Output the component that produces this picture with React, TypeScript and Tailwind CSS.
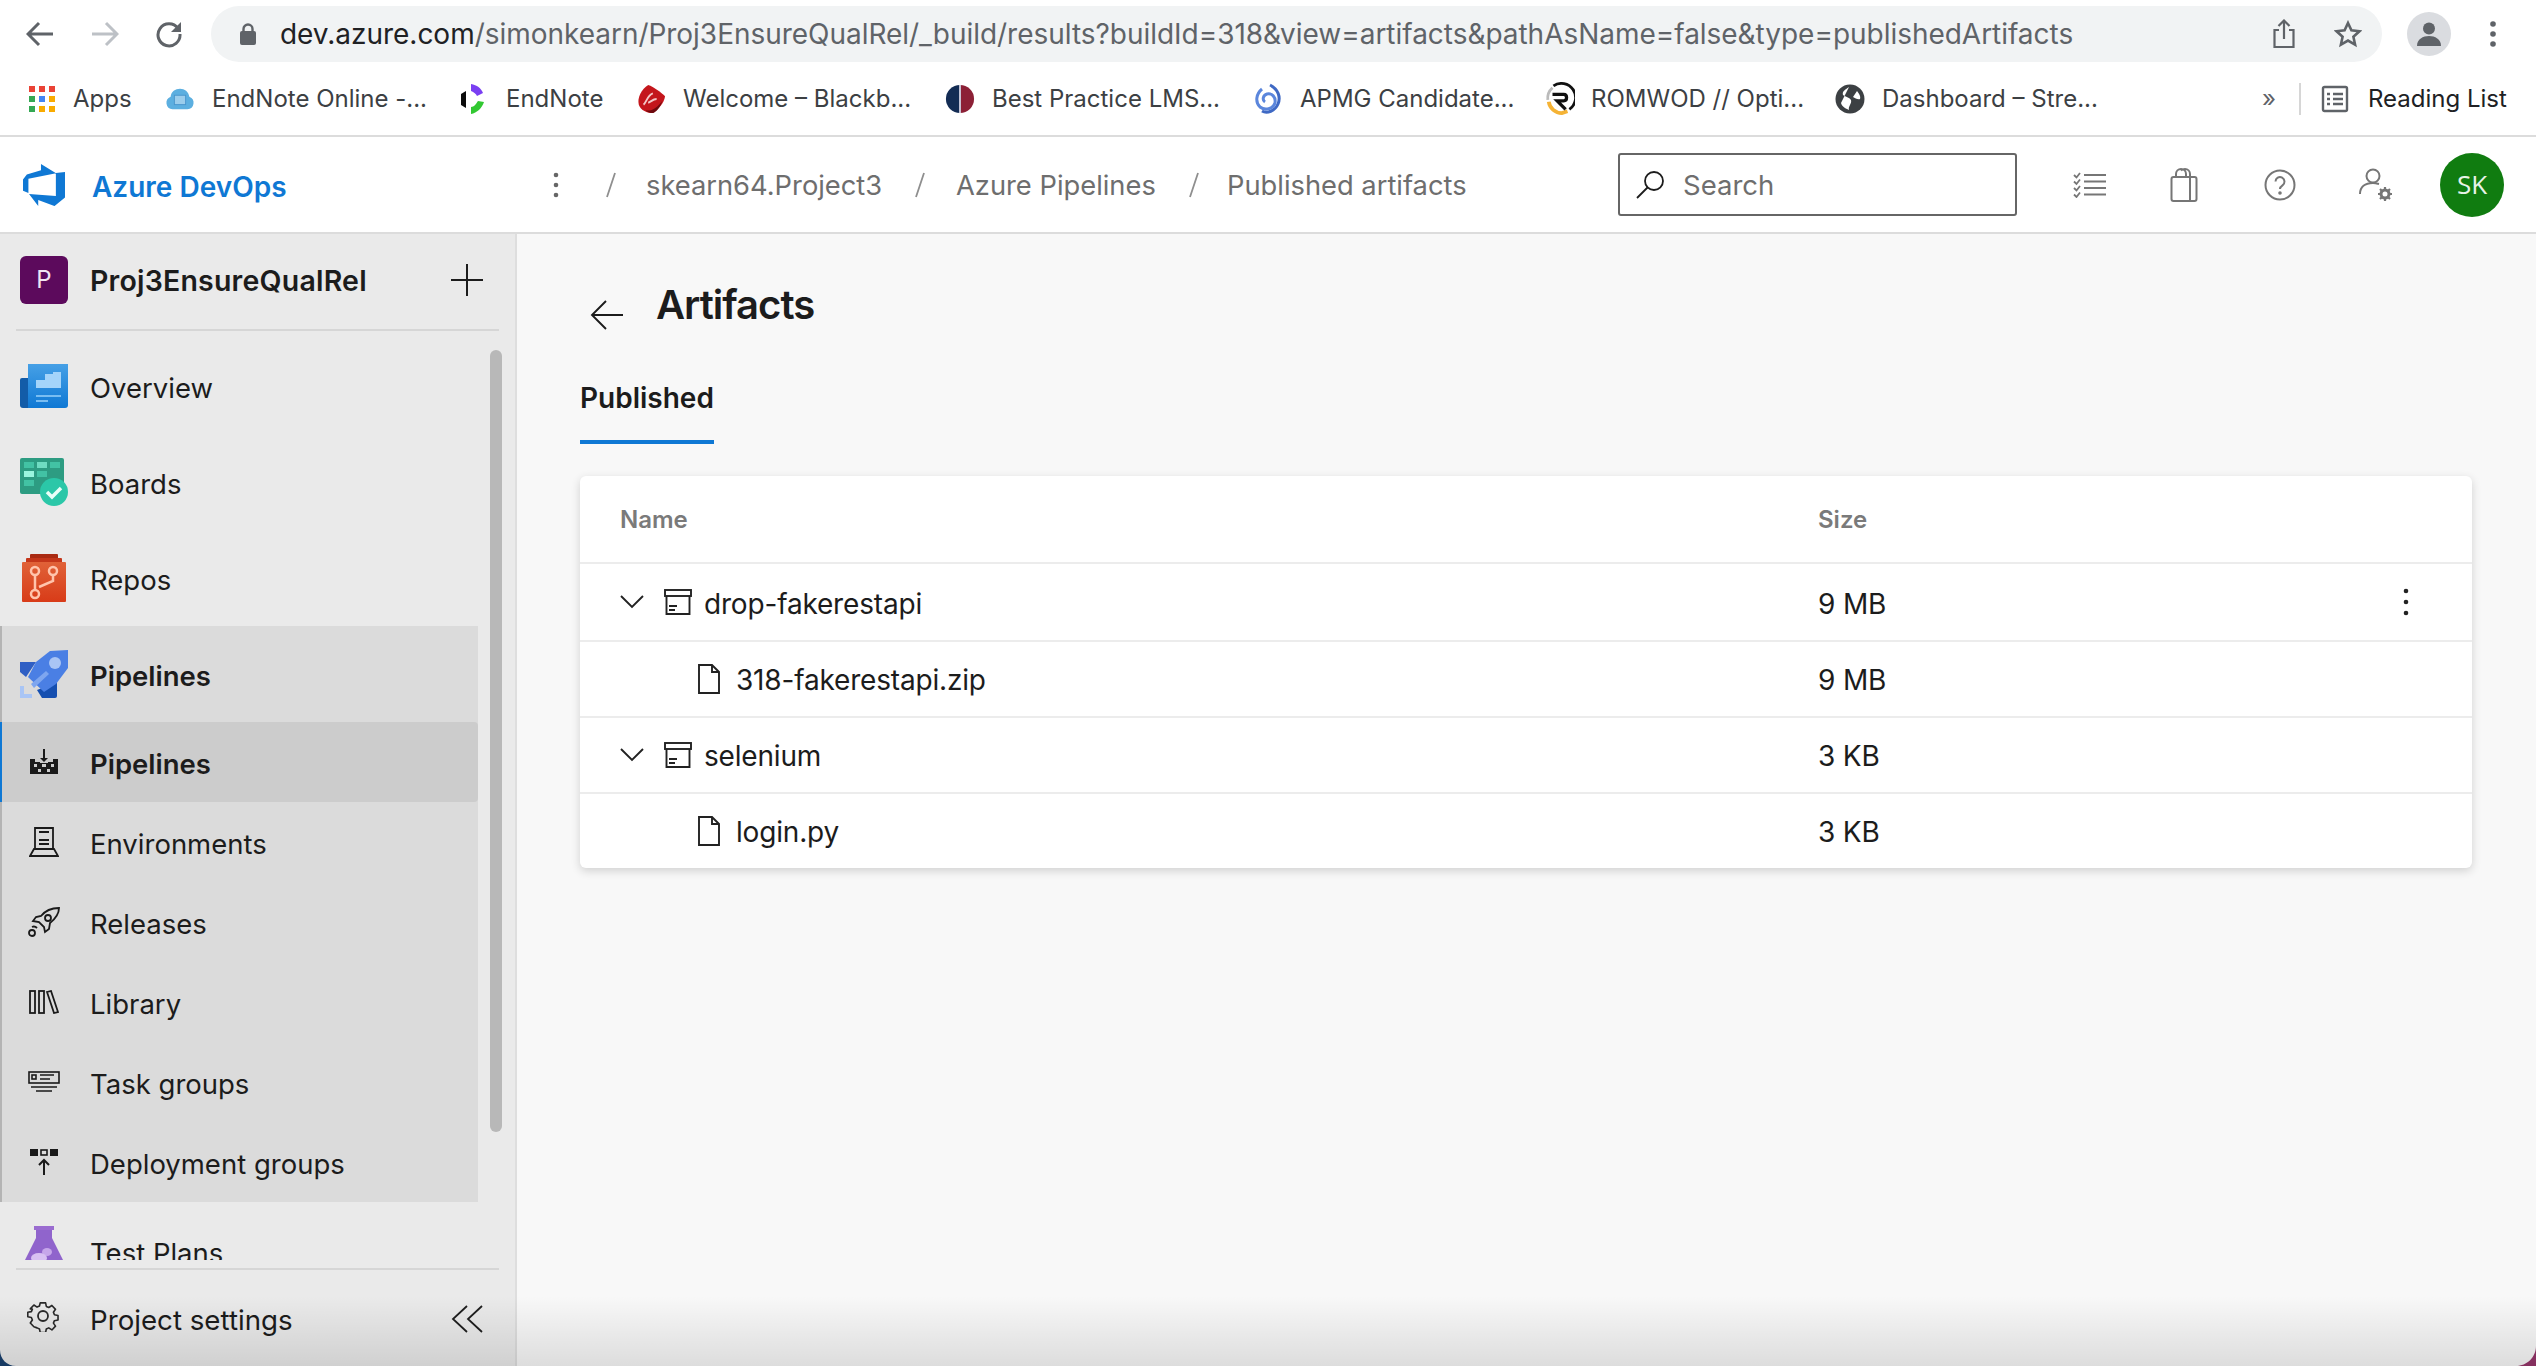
import React from "react";

const Back = () => (
  <svg width="28" height="26" viewBox="0 0 28 26" fill="none" stroke="#5f6368" strokeWidth="3"><path d="M27 13H3M13 2 2 13l11 11" /></svg>
);
const Forward = () => (
  <svg width="28" height="26" viewBox="0 0 28 26" fill="none" stroke="#bdc1c6" strokeWidth="3"><path d="M1 13h24M15 2l11 11-11 11" /></svg>
);
const Reload = () => (
  <svg width="28" height="28" viewBox="0 0 28 28" fill="none"><path d="M23 8.500A11 11 0 1 0 25 14" stroke="#5f6368" strokeWidth="3" /><path d="M26 2v10H16z" fill="#5f6368" /></svg>
);
const Lock = () => (
  <svg width="18" height="22" viewBox="0 0 18 22" fill="none"><rect x="1" y="8" width="16" height="14" rx="2" fill="#5f6368" /><path d="M4.500 9V6a4.500 4.500 0 0 1 9 0v3" stroke="#5f6368" strokeWidth="2.400" /></svg>
);
const Share = () => (
  <svg width="24" height="30" viewBox="0 0 24 30" fill="none" stroke="#5f6368" strokeWidth="2.200"><path d="M7 11H2.500v17h19V11H17M12 20V2M6.500 7 12 1.500 17.500 7" /></svg>
);
const Star = () => (
  <svg width="28" height="28" viewBox="0 0 28 28" fill="none" stroke="#5f6368" strokeWidth="2.600"><path d="m14 3 3.400 7.400 8 .9-6 5.400 1.700 7.900L14 20.600l-7.100 4 1.700-7.900-6-5.400 8-.9z" /></svg>
);
const Profile = () => (
  <div className="flex h-[44px] w-[44px] items-center justify-center rounded-full bg-[#dadce0]">
    <svg width="28" height="28" viewBox="0 0 28 28" fill="#5f6368"><circle cx="14" cy="8.500" r="6" /><path d="M2 26c0-7 6-10 12-10s12 3 12 10z" /></svg>
  </div>
);
const ChromeDots = () => (
  <svg width="6" height="26" viewBox="0 0 6 26" fill="#5f6368"><circle cx="3" cy="3" r="2.800" /><circle cx="3" cy="13" r="2.800" /><circle cx="3" cy="23" r="2.800" /></svg>
);

const AppsIcon = () => (
  <svg width="26" height="26" viewBox="0 0 26 26">
    {[
      ["#ea4335", 0, 0], ["#ea4335", 10, 0], ["#ea4335", 20, 0],
      ["#34a853", 0, 10], ["#4285f4", 10, 10], ["#f9ab00", 20, 10],
      ["#34a853", 0, 20], ["#f9ab00", 10, 20], ["#f9ab00", 20, 20],
    ].map(([c, x, y], i) => (
      <rect key={i} x={x as number} y={y as number} width="6" height="6" fill={c as string} />
    ))}
  </svg>
);
const EndNoteOnlineIcon = () => (
  <svg width="32" height="24" viewBox="0 0 32 24">
    <path d="M8 23a7 7 0 0 1-2-13.500C6.500 4 11 1 16 1s9 3 10 8.500A7 7 0 0 1 24 23z" fill="#5cafe0" />
    <rect x="10" y="8" width="12" height="10" fill="#9bcdec" stroke="#4a96cc" />
  </svg>
);
const EndNoteIcon = () => (
  <svg width="30" height="32" viewBox="0 0 30 32" fill="none">
    <path d="M13 1c6 1 10 4 12 9l-6 3c-1-2-3-4-6-5z" fill="#7a3ff2" />
    <path d="M8 8 3 11v11l5 3z" fill="#0b0b0b" />
    <path d="M26 19c-2 6-7 11-13 12v-7c3 0 5-3 7-6z" fill="#32c832" />
  </svg>
);
const VirginIcon = () => (
  <svg width="32" height="32" viewBox="0 0 32 32">
    <path d="M13 1c6 2 14 8 18 12-1 7-7 14-13 18C12 31 5 28 3 22 1 15 6 5 13 1z" fill="#c4161c" />
    <path d="M8 22c3-2 4-10 10-12M13 20c3-1 5-4 9-4" stroke="#f3c9c9" strokeWidth="2" fill="none" />
    <path d="M10 28c6 2 14-4 18-10-2 7-7 12-10 13-3 0-6-1-8-3z" fill="#6d0a0e" />
  </svg>
);
const BestIcon = () => (
  <svg width="32" height="32" viewBox="0 0 32 32">
    <path d="M16 1a15 15 0 0 0 0 30z" fill="#132c54" />
    <path d="M16 1a15 15 0 0 1 0 30z" fill="#8c2036" />
    <rect x="15" y="1" width="2" height="30" fill="#ccd" />
  </svg>
);
const ApmgIcon = () => (
  <svg width="30" height="32" viewBox="0 0 30 32" fill="none" stroke="#3f69c4" strokeWidth="3">
    <path d="M17 2c8 4 11 12 8 19-3 7-11 10-16 7" />
    <path d="M9 6C3 11 2 19 7 24c5 4 13 2 15-4 1-6-3-10-8-9-4 1-5 6-2 8" stroke="#5b86dc" />
  </svg>
);
const RomwodIcon = () => (
  <svg width="32" height="34" viewBox="0 0 32 34" fill="none">
    <path d="M9 3a15 15 0 0 1 17 25" stroke="#111" strokeWidth="3" />
    <path d="M8 5A15 15 0 0 0 3 18" stroke="#bbb" strokeWidth="3" />
    <path d="M4 20c1 7 7 12 14 12l6-2" stroke="#f5b335" strokeWidth="4" />
    <path d="M8 12h12c4 0 4 7 0 7h-7l9 9" stroke="#111" strokeWidth="3.500" />
  </svg>
);
const DashboardIcon = () => (
  <svg width="30" height="30" viewBox="0 0 30 30">
    <circle cx="15" cy="15" r="14.500" fill="#3c4043" />
    <path d="M14 3c-4 3-7 4-6 8 3 2 6 2 8 5 1 4-3 6-2 10-2-1-7-3-8-7M22 7c2 3 4 5 3 8-2 1-5-1-7-2z" fill="#fff" />
  </svg>
);
const ReadingIcon = () => (
  <svg width="28" height="28" viewBox="0 0 28 28" fill="none" stroke="#5f6368" strokeWidth="2.400">
    <rect x="2" y="2" width="24" height="24" rx="1.500" />
    <path d="M6 9h3M12 9h10M6 14h3M12 14h10M6 19h3M12 19h10" />
  </svg>
);

const bookmarks = [
  { w: "w-[138px]", icon: <AppsIcon />, gap: "gap-[16px]", ml: "ml-[27px]", label: "Apps" },
  { w: "w-[293px]", icon: <EndNoteOnlineIcon />, gap: "gap-[17px]", ml: "", label: "EndNote Online -..." },
  { w: "w-[178px]", icon: <EndNoteIcon />, gap: "gap-[18px]", ml: "", label: "EndNote" },
  { w: "w-[309px]", icon: <VirginIcon />, gap: "gap-[17px]", ml: "", label: "Welcome – Blackb..." },
  { w: "w-[308px]", icon: <BestIcon />, gap: "gap-[17px]", ml: "", label: "Best Practice LMS..." },
  { w: "w-[292px]", icon: <ApmgIcon />, gap: "gap-[17px]", ml: "", label: "APMG Candidate..." },
  { w: "w-[290px]", icon: <RomwodIcon />, gap: "gap-[16px]", ml: "", label: "ROMWOD // Opti..." },
  { w: "w-[427px]", icon: <DashboardIcon />, gap: "gap-[17px]", ml: "", label: "Dashboard – Stre..." },
];

const Crumb = ({ children }: { children: React.ReactNode }) => (
  <span className="block whitespace-nowrap pt-[4px] text-[27.3px] text-[#6e6e6e]">{children}</span>
);
const Slash = () => (
  <svg width="12" height="26" viewBox="0 0 12 26" fill="none" stroke="#8f8f8f" strokeWidth="1.800"><path d="M10 1 2 25" /></svg>
);

const ListIcon = () => (
  <svg width="34" height="26" viewBox="0 0 34 26" fill="none" stroke="#767676" strokeWidth="2.200">
    <path d="M11 3h22M11 9.500h22M11 16h22M11 22.500h22" />
    <path d="M1 3l2.500 2.500L7 1M1 9.500 3.500 12 7 7.500M1 16l2.500 2.500L7 14M1 22.500 3.500 25 7 20.500" strokeWidth="1.800" />
  </svg>
);
const BagIcon = () => (
  <svg width="28" height="34" viewBox="0 0 28 34" fill="none" stroke="#767676" strokeWidth="2">
    <rect x="1.500" y="9" width="25" height="24" rx="2" />
    <path d="M20 9v24M6 9V6a5 5 0 0 1 10 0v3M11 2.500C12 1.500 13 1 15 1a5 5 0 0 1 5 5v3" />
  </svg>
);
const HelpIcon = () => (
  <svg width="32" height="32" viewBox="0 0 32 32" fill="none" stroke="#767676" strokeWidth="2">
    <circle cx="16" cy="16" r="14.500" />
    <path d="M11.500 12.500a4.500 4.500 0 1 1 7 3.800c-1.500 1-2.500 1.700-2.500 3.700" />
    <circle cx="16" cy="24" r="0.800" fill="#767676" />
  </svg>
);
const UserGearIcon = () => (
  <svg width="34" height="34" viewBox="0 0 34 34" fill="none" stroke="#767676" strokeWidth="2">
    <circle cx="14" cy="8" r="6.500" />
    <path d="M1 26c0-7 5-11 13-11 2 0 4 .5 6 1" />
    <circle cx="26" cy="26" r="4" strokeWidth="3" />
    <path d="M26 19v3M26 30v3M19 26h3M30 26h3M21 21l2 2M29 29l2 2M21 31l2-2M29 23l2-2" strokeWidth="2.200" />
  </svg>
);

const OverviewIcon = () => (
  <svg width="48" height="44" viewBox="0 0 48 44">
    <defs>
      <linearGradient id="ovg" x1="0" y1="0" x2="0" y2="1">
        <stop offset="0" stopColor="#46a0e6" />
        <stop offset="1" stopColor="#0f78d4" />
      </linearGradient>
    </defs>
    <path d="M2 14h8v30H3a3 3 0 0 1-3-3V16a2 2 0 0 1 2-2z" fill="#135ca8" />
    <path d="M8 0h40v41a3 3 0 0 1-3 3H8z" fill="url(#ovg)" />
    <path d="M16 16h9v-6h8V8h8v16H16z" fill="#a4d4fa" />
    <path d="M16 31h25v2H16zM16 36h12v2H16z" fill="#79bdf2" />
  </svg>
);
const BoardsIcon = () => (
  <svg width="48" height="48" viewBox="0 0 48 48">
    <rect width="44" height="36" rx="2" fill="#2d9c82" />
    <rect x="4" y="4" width="10" height="6" fill="#42c2a4" />
    <rect x="17" y="4" width="10" height="6" fill="#6fdcc2" />
    <rect x="30" y="4" width="10" height="6" fill="#42c2a4" />
    <rect x="4" y="13" width="10" height="6" fill="#9af5de" />
    <rect x="17" y="13" width="10" height="6" fill="#42c2a4" />
    <rect x="4" y="22" width="10" height="6" fill="#42c2a4" />
    <circle cx="34" cy="34" r="14" fill="#2bc7a8" />
    <path d="m27 34 5 5 9-9" fill="none" stroke="#e9fff9" strokeWidth="3.500" />
  </svg>
);
const ReposIcon = () => (
  <svg width="44" height="48" viewBox="0 0 44 48">
    <defs>
      <linearGradient id="rpg" x1="0" y1="0" x2="0" y2="1">
        <stop offset="0" stopColor="#e06238" />
        <stop offset="1" stopColor="#d83b18" />
      </linearGradient>
    </defs>
    <rect x="8" y="0" width="28" height="6" rx="1" fill="#a92a12" />
    <rect x="4" y="4" width="36" height="8" rx="1" fill="#c4361a" />
    <rect y="8" width="44" height="40" rx="1" fill="url(#rpg)" />
    <g fill="none" stroke="#ffc4ac" strokeWidth="2.500">
      <circle cx="13" cy="17" r="4" /><circle cx="31" cy="17" r="4" /><circle cx="13" cy="40" r="4" />
      <path d="M13 21v15M31 21v6l-14 6" />
    </g>
  </svg>
);
const RocketIcon = () => (
  <svg width="48" height="48" viewBox="0 0 48 48">
    <path d="M0 12h16L6 27 0 22z" fill="#2f5fc4" />
    <path d="M22 48h13a2 2 0 0 0 2-2V32L17 40z" fill="#154fb0" />
    <path d="M16 12 30 1l18-1v18L36 34 24 42 8 27z" fill="#4a7fe4" />
    <path d="M11 34 26 21l3 3-15 14z" fill="#7ea6ef" />
    <circle cx="35" cy="13" r="6" fill="#a9c5f5" />
    <path d="M0 36h4v8h8v4H0z" fill="#a9c5f5" />
  </svg>
);
const FlaskIcon = () => (
  <svg width="40" height="34" viewBox="0 0 40 34">
    <rect x="10" y="0" width="20" height="4" fill="#9a6cd0" />
    <path d="M12 4h16v8l11 22H1l11-22z" fill="#9064cc" />
    <ellipse cx="23" cy="26" rx="5" ry="4" fill="#c6a6ea" />
    <ellipse cx="15" cy="32" rx="8" ry="5" fill="#d8c0f2" />
  </svg>
);

const PipeSub = () => (
  <svg width="30" height="26" viewBox="0 0 30 26" fill="#1a1a1a">
    <path d="M14 0h2v9h3l-4 4-4-4h3z" />
    <path d="M1 10h5v3h5v1h8v-1h5v-3h5v15H1zM5 15v3h3v-3zM13 15v3h4v-3zM22 15v3h3v-3zM9 20v3h3v-3zM18 20v3h3v-3z" fillRule="evenodd" />
  </svg>
);
const EnvIcon = () => (
  <svg width="30" height="30" viewBox="0 0 30 30" fill="none" stroke="#1a1a1a" strokeWidth="1.800">
    <path d="M6 22V1h18v21M1 29l4-7h20l4 7zM1 29h28" />
    <path d="M10 13h10M10 17h10M10 5h10" />
  </svg>
);
const RelIcon = () => (
  <svg width="32" height="30" viewBox="0 0 32 30" fill="none" stroke="#1a1a1a" strokeWidth="1.800">
    <path d="M31 1c-8 0-14 3-18 8l-5 1-3 4 6 1 5 5 1 5 4-3 1-6c5-4 9-8 9-15z" />
    <circle cx="20" cy="11" r="3" />
    <circle cx="4" cy="26" r="3" />
    <path d="M4 20c2-1 4 0 5 1" />
  </svg>
);
const LibIcon = () => (
  <svg width="30" height="24" viewBox="0 0 30 24" fill="none" stroke="#1a1a1a" strokeWidth="1.800">
    <rect x="1" y="1" width="5" height="22" /><rect x="10" y="1" width="5" height="22" />
    <path d="m18 2 4-1 7 21-4 1z" />
  </svg>
);
const TaskIcon = () => (
  <svg width="32" height="22" viewBox="0 0 32 22" fill="none" stroke="#1a1a1a" strokeWidth="1.600">
    <rect x="1" y="1" width="30" height="11" />
    <rect x="4" y="4" width="4" height="4" />
    <path d="M12 4h14M12 8h10M3 16h26M8 20h16" />
  </svg>
);
const DeployIcon = () => (
  <svg width="30" height="26" viewBox="0 0 30 26">
    <rect x="1" y="0" width="8" height="7" fill="#1a1a1a" />
    <rect x="12" y="1" width="6" height="5" fill="none" stroke="#1a1a1a" strokeWidth="1.600" />
    <rect x="21" y="0" width="8" height="7" fill="#1a1a1a" />
    <path d="M15 26V12M10 16l5-5 5 5" fill="none" stroke="#1a1a1a" strokeWidth="2" />
  </svg>
);
const GearIcon = () => (
  <svg width="32" height="32" viewBox="0 0 32 32" fill="none" stroke="#2a2a2a" strokeWidth="1.800" strokeLinejoin="round">
    <circle cx="16" cy="16" r="5" />
    <path d="m13 1.500 6 0 .8 4 2.700 1.200 3.500-2.300 4 4.300-2.300 3.300 1.100 2.800 4 .7v5l-4 .8-1.100 2.700 2.300 3.400-4 4.200-3.500-2.300-2.700 1.200-.8 4h-6l-.8-4-2.700-1.200L6 28.100l-4-4.200 2.300-3.400-1.100-2.700-4-.8v-5l4-.7 1.100-2.800L2 8.200l4-4.300 3.500 2.300 2.700-1.200z" transform="translate(1.500 1.500) scale(.9)" />
  </svg>
);
const Collapse = () => (
  <svg width="32" height="28" viewBox="0 0 32 28" fill="none" stroke="#1f1f1f" strokeWidth="1.800"><path d="M16 1 2 14l14 13M31 1 17 14l14 13" /></svg>
);
const Chevron = () => (
  <svg width="24" height="14" viewBox="0 0 24 14" fill="none" stroke="#222" strokeWidth="1.900"><path d="m1 1 11 11L23 1" /></svg>
);
const BoxIcon = () => (
  <svg width="28" height="26" viewBox="0 0 28 26" fill="none" stroke="#222" strokeWidth="1.900">
    <rect x="1" y="1" width="26" height="6" /><path d="M2.500 7v18h23V7M5 17h8M5 21h6" />
  </svg>
);
const FileIcon = () => (
  <svg width="24" height="30" viewBox="0 0 24 30" fill="none" stroke="#222" strokeWidth="1.900">
    <path d="M2 1h13l7 7v21H2zM15 1v7h7" />
  </svg>
);

const Sub = ({ icon, label, selected }: { icon: React.ReactNode; label: string; selected?: boolean }) => (
  <div className={`flex h-[80px] items-center rounded-r-[4px] ${selected ? "-ml-[2px] border-l-[2px] border-[#0f78d4] bg-[#cccccc] font-semibold" : ""}`}>
    <div className="ml-[15px] flex w-[53px] justify-center">{icon}</div>
    <span className="ml-[20px] pt-[6px] text-[27.5px] text-[#1c1c1c]">{label}</span>
  </div>
);

const Top = ({ icon, label }: { icon: React.ReactNode; label: string }) => (
  <div className="flex h-[96px] items-center pl-[20px]">
    <div className="flex w-[48px] justify-center">{icon}</div>
    <span className="ml-[22px] pt-[6px] text-[27.5px] text-[#1c1c1c]">{label}</span>
  </div>
);

const Row = ({ h, chevron, label, size, dots, last, pt }: { h: string; chevron?: boolean; label: string; size: string; dots?: boolean; last?: boolean; pt: string }) => (
  <div className={`flex ${h} items-center ${last ? "" : "border-b-2 border-[#ececec]"}`}>
    <div className="flex w-[1238px] items-center">
      {chevron ? (
        <>
          <div className="ml-[40px]"><Chevron /></div>
          <div className="ml-[20px]"><BoxIcon /></div>
          <span className={`ml-[12px] ${pt} text-[28px] tracking-[-0.18px] text-[#1c1c1c]`}>{label}</span>
        </>
      ) : (
        <>
          <div className="ml-[117px]"><FileIcon /></div>
          <span className={`ml-[15px] ${pt} text-[28px] tracking-[-0.18px] text-[#1c1c1c]`}>{label}</span>
        </>
      )}
    </div>
    <span className={`${pt} text-[28px] tracking-[-0.18px] text-[#1c1c1c]`}>{size}</span>
    {dots && (
      <svg className="ml-auto mr-[63px]" width="6" height="28" viewBox="0 0 6 28" fill="#222"><circle cx="3" cy="3" r="2.300" /><circle cx="3" cy="14" r="2.300" /><circle cx="3" cy="25" r="2.300" /></svg>
    )}
  </div>
);

export default function App() {
  return (
    <div className="relative flex h-[1366px] w-[2536px] flex-col overflow-hidden bg-white font-['Inter','Liberation_Sans',sans-serif]">
      {/* browser toolbar */}
      <div className="flex h-[68px] shrink-0 items-center pb-[1px]">
        <div className="ml-[26px]"><Back /></div>
        <div className="ml-[37px]"><Forward /></div>
        <div className="ml-[36px]"><Reload /></div>
        <div className="ml-[28px] flex h-[56px] w-[2171px] items-center rounded-full bg-[#f1f3f4]">
          <div className="ml-[28px]"><Lock /></div>
          <div className="ml-[23px] whitespace-nowrap text-[28px] tracking-[-0.03px] text-[#5f6368]">
            <span className="text-[#202124]">dev.azure.com</span>/simonkearn/Proj3EnsureQualRel/_build/results?buildId=318&amp;view=artifacts&amp;pathAsName=false&amp;type=publishedArtifacts
          </div>
          <div className="ml-auto mr-[86px]"><Share /></div>
          <div className="absolute left-[2334px] top-[20px]"><Star /></div>
        </div>
        <div className="ml-[25px]"><Profile /></div>
        <div className="ml-[39px]"><ChromeDots /></div>
      </div>
      {/* bookmarks */}
      <div className="flex h-[67px] shrink-0 items-center pb-[6px] text-[24px] text-[#3c4043]">
        {bookmarks.map((b) => (
          <div key={b.label} className={`flex ${b.w} ${b.ml} shrink-0 items-center ${b.gap}`}>
            <span className="flex w-[30px] shrink-0 justify-center">{b.icon}</span>
            <span className="whitespace-nowrap">{b.label}</span>
          </div>
        ))}
        <span className="text-[#5f6368]">»</span>
        <div className="ml-[23px] h-[32px] w-[2px] bg-[#d6d6d6]" />
        <div className="ml-[20px]"><ReadingIcon /></div>
        <span className="ml-[19px] whitespace-nowrap text-[#202124]">Reading List</span>
      </div>
      <div className="h-[2px] shrink-0 bg-[#dcdcdc]" />
      {/* ADO header */}
      <div className="flex h-[95px] shrink-0 items-center">
        <svg className="ml-[23px]" width="42" height="42" viewBox="1 1 16 16" fill="#0f78d4"><path d="M17 4v9.740l-4 3.280-6.200-2.260V17l-3.510-4.590 10.230.8V4.440zm-3.410.49L7.850 1v2.350L2.460 5.030 1 6.910v4.270l2.060.91V6.650z" /></svg>
        <span className="ml-[27px] w-[461px] pt-[4px] text-[28px] font-semibold text-[#0f78d4]">Azure DevOps</span>
        <svg width="6" height="26" viewBox="0 0 6 26" fill="#666"><circle cx="3" cy="3" r="2.300" /><circle cx="3" cy="13" r="2.300" /><circle cx="3" cy="23" r="2.300" /></svg>
        <div className="ml-[46px]"><Slash /></div>
        <div className="ml-[29px] w-[268px]"><Crumb>skearn64.Project3</Crumb></div>
        <Slash />
        <div className="ml-[30px] w-[232px]"><Crumb>Azure Pipelines</Crumb></div>
        <Slash />
        <div className="ml-[27px] w-[391px]"><Crumb>Published artifacts</Crumb></div>
        <div className="flex h-[63px] w-[399px] items-center rounded-[3px] border-2 border-[#666]">
          <svg className="ml-[15px]" width="30" height="30" viewBox="0 0 30 30" fill="none" stroke="#1c1c1c" strokeWidth="1.800"><circle cx="19" cy="11" r="9" /><path d="M12.500 17.500 2 28" /></svg>
          <span className="ml-[18px] pt-[2px] text-[27.5px] text-[#6e6e6e]">Search</span>
        </div>
        <div className="flex w-[90px] justify-end"><ListIcon /></div>
        <div className="ml-[63px]"><BagIcon /></div>
        <div className="ml-[66px]"><HelpIcon /></div>
        <div className="ml-[63px]"><UserGearIcon /></div>
        <div className="ml-[47px] flex h-[64px] w-[64px] items-center justify-center rounded-full bg-[#107c10] font-['Open_Sans',sans-serif] text-[26px] text-[#e8f3e8]">SK</div>
      </div>
      <div className="h-[2px] shrink-0 bg-[#dcdcdc]" />
      {/* body */}
      <div className="flex min-h-0 flex-1">
        {/* sidebar */}
        <aside className="relative flex w-[517px] shrink-0 flex-col border-r-2 border-[#dedede] bg-[#eaeaea]">
          <div className="flex h-[95px] shrink-0 items-center pb-[4px]">
            <div className="ml-[20px] flex h-[48px] w-[48px] items-center justify-center rounded-[6px] bg-[#5c0a5c] text-[24px] text-[#f2e6f2]">P</div>
            <span className="ml-[22px] pt-[3px] text-[28.5px] font-semibold tracking-[0.2px] text-[#1c1c1c]">Proj3EnsureQualRel</span>
            <svg className="ml-auto mr-[32px]" width="32" height="32" viewBox="0 0 32 32" stroke="#1c1c1c" strokeWidth="2"><path d="M16 0v32M0 16h32" /></svg>
          </div>
          <div className="mx-[16px] h-[2px] shrink-0 bg-[#d6d6d6]" />
          <div className="h-[929px] shrink-0 overflow-hidden pt-[7px]">
            <Top icon={<OverviewIcon />} label="Overview" />
            <Top icon={<BoardsIcon />} label="Boards" />
            <Top icon={<ReposIcon />} label="Repos" />
            <div className="w-[478px] border-l-2 border-[#b4b4b4] bg-[#dbdbdb]">
              <div className="flex h-[96px] items-center pl-[18px] font-semibold">
                <div className="flex w-[48px] justify-center"><RocketIcon /></div>
                <span className="ml-[22px] pt-[6px] text-[27.5px] text-[#1c1c1c]">Pipelines</span>
              </div>
              <Sub selected icon={<PipeSub />} label="Pipelines" />
              <Sub icon={<EnvIcon />} label="Environments" />
              <Sub icon={<RelIcon />} label="Releases" />
              <Sub icon={<LibIcon />} label="Library" />
              <Sub icon={<TaskIcon />} label="Task groups" />
              <Sub icon={<DeployIcon />} label="Deployment groups" />
            </div>
            <div className="flex h-[96px] items-start pl-[20px] pt-[24px]">
              <div className="flex w-[48px] justify-center"><FlaskIcon /></div>
              <span className="ml-[22px] mt-[7px] text-[27.5px] text-[#1c1c1c]">Test Plans</span>
            </div>
          </div>
          <div className="mx-[16px] mt-[8px] h-[2px] shrink-0 bg-[#d6d6d6]" />
          <div className="flex flex-1 items-start pt-[30px]">
            <div className="ml-[27px]"><GearIcon /></div>
            <span className="ml-[31px] text-[27.7px] text-[#1c1c1c]">Project settings</span>
            <div className="ml-auto mr-[32px] mt-[5px]"><Collapse /></div>
          </div>
          <div className="absolute left-[490px] top-[116px] h-[782px] w-[12px] rounded-full bg-[#b8b8b8]" />
        </aside>
        {/* main */}
        <main className="min-w-0 flex-1 bg-[#f8f8f8] pl-[63px] pr-[64px]">
          <div className="mt-[46px] flex h-[50px] items-center">
            <svg className="ml-[10px] mt-[20px]" width="33" height="30" viewBox="0 0 33 30" fill="none" stroke="#1c1c1c" strokeWidth="1.900"><path d="M33 15H2M16 1 2 15l14 14" /></svg>
            <h1 className="ml-[33px] text-[40px] font-semibold tracking-[-1px] text-[#1c1c1c]">Artifacts</h1>
          </div>
          <div className="mt-[42px] h-[72px] w-[134px] whitespace-nowrap border-b-4 border-[#0f78d4] pt-[9px] text-[28px] font-semibold leading-[34px] text-[#1c1c1c]">Published</div>
          <div className="mt-[32px] h-[392px] rounded-[6px] bg-white shadow-[0_3px_10px_rgba(0,0,0,0.16)]">
            <div className="flex h-[88px] items-center border-b-2 border-[#ececec] pt-[2px] text-[24px] font-semibold text-[#7a7a7a]">
              <span className="ml-[40px] w-[1198px]">Name</span>
              <span>Size</span>
            </div>
            <Row h="h-[78px]" chevron label="drop-fakerestapi" size="9 MB" dots pt="pt-[3px]" />
            <Row h="h-[76px]" label="318-fakerestapi.zip" size="9 MB" pt="pt-[1px]" />
            <Row h="h-[76px]" chevron label="selenium" size="3 KB" pt="pt-[1px]" />
            <Row h="h-[74px]" label="login.py" size="3 KB" last pt="pt-[1px]" />
          </div>
        </main>
      </div>
      {/* window edge shading */}
      <div className="pointer-events-none absolute inset-x-0 bottom-0 h-[70px] bg-gradient-to-t from-black/[0.11] to-transparent" />
      <svg className="absolute bottom-0 left-0" width="16" height="16" viewBox="0 0 16 16"><path d="M0 0v16h16C7 16 0 9 0 0z" fill="#173a63" /></svg>
      <svg className="absolute bottom-0 right-0" width="20" height="20" viewBox="0 0 20 20"><path d="M20 0v20H0c11 0 20-9 20-20z" fill="#86305f" /></svg>
    </div>
  );
}
